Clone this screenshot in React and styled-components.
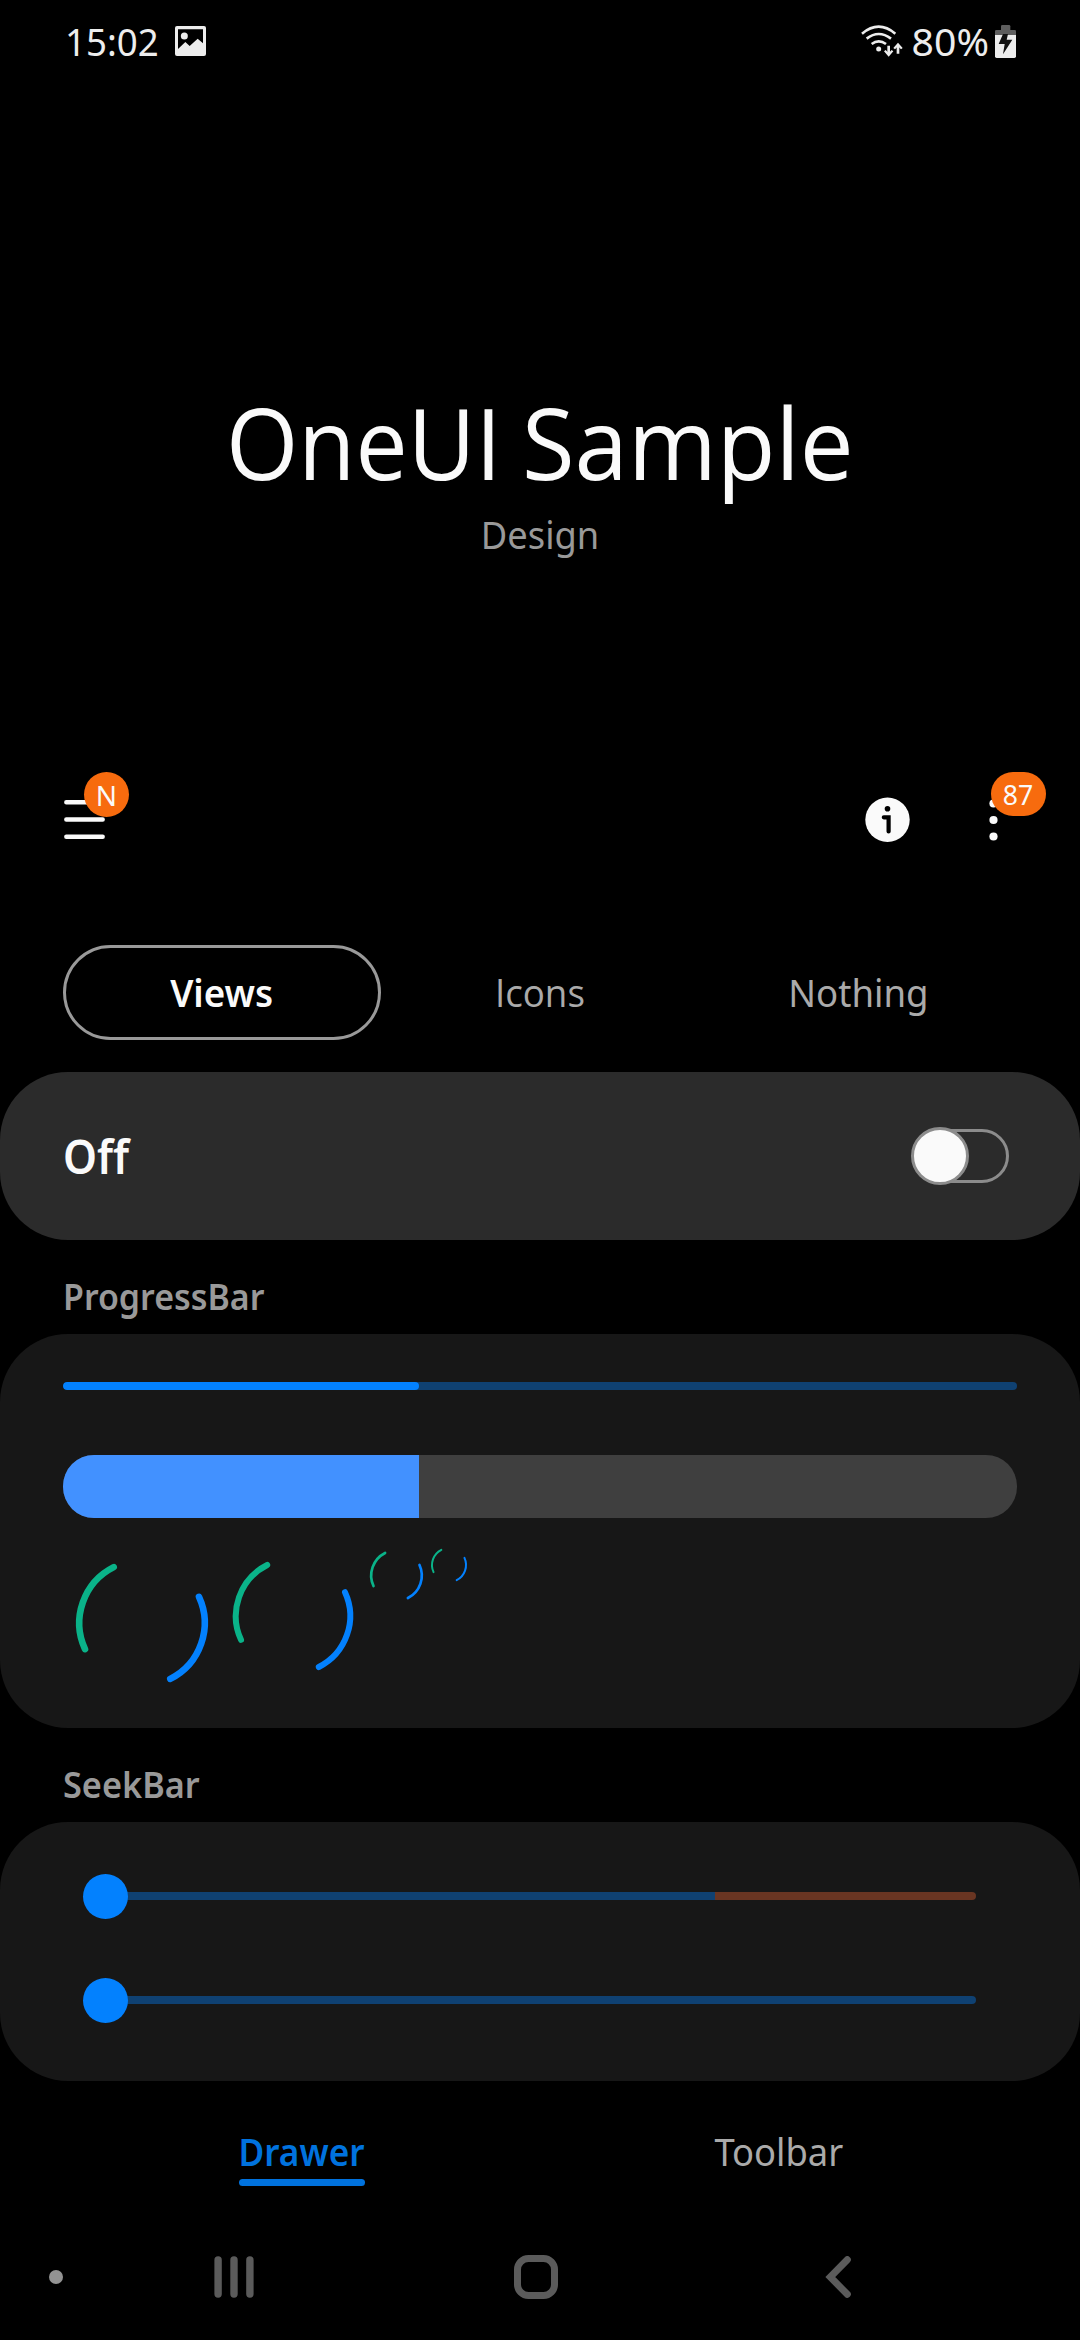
import React from "react";
import styled, { createGlobalStyle } from "styled-components";

const GlobalStyle = createGlobalStyle`
  *, *::before, *::after { box-sizing: border-box; }
  body {
    margin: 0;
    background: #000;
    color: #fafafa;
    font-family: "Noto Sans", "Open Sans", sans-serif;
  }
  button {
    border: 0;
    padding: 0;
    background: none;
    color: inherit;
    font: inherit;
  }
  svg { display: block; }
`;

const Screen = styled.div`
  display: flex;
  flex-direction: column;
  width: 1080px;
  height: 2340px;
  overflow: hidden;
`;

/* Text set slightly narrower than the family's own width. */
const Label = styled.span`
  display: inline-block;
  white-space: pre;
  font-family: ${(p) => (p.$plain ? '"Open Sans"' : '"Noto Sans"')}, sans-serif;
  transform: scaleX(${(p) => p.$narrow || 1});
  transform-origin: ${(p) => p.$origin || "center"};
`;

const StatusBar = styled.header`
  display: flex;
  justify-content: space-between;
  align-items: center;
  height: 82px;
  padding: 0 64px 0 65px;
  color: #ededed;
  font-size: 38.8px;
  line-height: 50px;
`;

const StatusGroup = styled.div`
  display: flex;
  align-items: center;
`;

const Clock = styled.div`
  width: 110px;
`;

const Percent = styled.div`
  display: flex;
  justify-content: center;
  width: 92px;
  padding-left: 2px;
`;

const Hero = styled.section`
  display: flex;
  flex-direction: column;
  align-items: center;
  height: 663px;
  padding-top: 299px;
`;

const Title = styled.h1`
  display: flex;
  margin: 0;
  font-size: 99.5px;
  font-weight: 400;
  line-height: 121px;
`;

const TitleWord = styled(Label)`
  margin-left: ${(p) => p.$tuck || "0"};
`;

const Subtitle = styled.p`
  margin: 7px 0 0;
  color: #999;
  font-size: 38px;
  line-height: 50px;
`;

const Toolbar = styled.div`
  display: flex;
  align-items: center;
  height: 149px;
  padding: 0 82px 0 64px;
`;

const ToolButton = styled.button`
  position: relative;
  margin-left: ${(p) => p.$gap || "0"};
`;

const Badge = styled.span`
  position: absolute;
  left: ${(p) => p.$left};
  top: ${(p) => p.$top};
  display: flex;
  align-items: center;
  justify-content: center;
  width: ${(p) => p.$width};
  height: ${(p) => p.$height};
  border-radius: 23px;
  background: #f76b0e;
  font-size: 28px;
`;

const Tabs = styled.nav`
  display: grid;
  grid-template-columns: repeat(3, 1fr);
  margin: 51px 63px 32px;
  height: 95px;
`;

const Tab = styled.button`
  padding-bottom: 2px;
  border: 3px solid ${(p) => (p.$active ? "#999" : "transparent")};
  border-radius: 47.5px;
  color: ${(p) => (p.$active ? "#fafafa" : "#aaa")};
  font-size: 38.3px;
  font-weight: ${(p) => (p.$active ? 600 : 400)};
`;

const SwitchBar = styled.section`
  display: flex;
  align-items: center;
  justify-content: space-between;
  height: 168px;
  padding: 0 71px 0 63px;
  border-radius: 68px;
  background: #2b2b2b;
  font-size: 47px;
  font-weight: 600;
`;

const Switch = styled.button`
  position: relative;
  width: 98px;
  height: 58px;
  padding: 2px 0 2px 6px;
`;

const SwitchTrack = styled.span`
  display: block;
  height: 54px;
  border: 3px solid #8c8c8c;
  border-radius: 27px;
`;

const SwitchThumb = styled.span`
  position: absolute;
  left: 0;
  top: 0;
  width: 58px;
  height: 58px;
  border: 3px solid #8c8c8c;
  border-radius: 50%;
  background: #fafafa;
`;

const SectionTitle = styled.h2`
  height: 94px;
  margin: 0;
  padding: 18px 63px 0;
  color: #999;
  font-size: 36.5px;
  font-weight: 600;
  line-height: 76px;
`;

const Card = styled.section`
  height: ${(p) => p.$height};
  padding: ${(p) => p.$padding};
  border-radius: 68px;
  background: #171717;
`;

const Progress = styled.div`
  overflow: hidden;
  height: 8px;
  border-radius: 4px;
  background: #0f4172;
`;

const ProgressFill = styled.div`
  width: 356px;
  height: 100%;
  border-radius: 4px;
  background: #0381fe;
`;

const BigProgress = styled(Progress)`
  height: 63px;
  margin-top: 65px;
  border-radius: 31px;
  background: #3f3f3f;
`;

const BigProgressFill = styled(ProgressFill)`
  border-radius: 0;
  background: #4291ff;
`;

const Spinners = styled.div`
  display: flex;
  align-items: flex-start;
  margin-top: 26px;
`;

const Seek = styled.div`
  display: flex;
  align-items: center;
  height: ${(p) => p.$height};
`;

const SeekThumb = styled.span`
  z-index: 1;
  width: 45px;
  height: 45px;
  border-radius: 50%;
  background: #0381fe;
`;

const SeekTrack = styled.span`
  width: ${(p) => p.$width};
  height: 8px;
  margin-left: ${(p) => p.$overlap || "0"};
  border-radius: ${(p) => (p.$end ? "0 4px 4px 0" : "0")};
  background: ${(p) => (p.$warn ? "#693522" : "#0f4172")};
`;

const BottomTabs = styled.nav`
  display: grid;
  grid-template-columns: 1fr 1fr;
  height: 133px;
  padding: 42px 63px 0;
`;

const BottomTab = styled.button`
  display: flex;
  flex-direction: column;
  align-items: center;
  color: ${(p) => (p.$active ? "#0072de" : "#aaa")};
  font-size: 38.3px;
  font-weight: ${(p) => (p.$active ? 600 : 400)};
  line-height: 56px;
`;

const Underline = styled.span`
  width: 126px;
  height: 7px;
  border-radius: 3.5px;
  background: #0072de;
`;

const SystemNav = styled.footer`
  display: flex;
  align-items: center;
  height: 126px;
  padding-left: 49px;
`;

const NavDot = styled.span`
  width: 14px;
  height: 14px;
  margin-right: 20px;
  border-radius: 50%;
  background: #939393;
`;

const NavButton = styled.button`
  display: flex;
  justify-content: center;
  width: 302px;
`;

const PictureIcon = () => (
  <svg width="31" height="30" viewBox="405 78 93 90">
    <rect x="405" y="78" width="93" height="90" rx="6" fill="#ededed" />
    <path d="M414 88H489V130L473 116L449 138L436 126L414 147Z" fill="#000" />
    <circle cx="433" cy="108" r="10.5" fill="#ededed" />
  </svg>
);

const WifiIcon = () => (
  <svg width="42" height="34" viewBox="62 73 126 102" fill="none" stroke="#ededed" strokeWidth="8">
    <path d="M65 102Q115 60 165 102" />
    <path d="M79 117Q115 89 152 117" />
    <path d="M94 133Q115 117 137 133" />
    <circle cx="115" cy="148" r="7.5" fill="#ededed" stroke="none" />
    <path d="M145 138V160M173 162V138" />
    <path d="M131 155L145 171L159 155L154 151L145 160L136 151Z" fill="#ededed" stroke="none" />
    <path d="M159 145L173 129L187 145L182 149L173 140L164 149Z" fill="#ededed" stroke="none" />
  </svg>
);

const BatteryIcon = () => (
  <svg width="21" height="33" viewBox="465 75 63 99">
    <path d="M483 90V79Q483 75 487 75H507Q511 75 511 79V90Z" fill="#5e5e5e" />
    <path d="M465 106V94Q465 90 469 90H524Q528 90 528 94V106Z" fill="#5e5e5e" />
    <path d="M465 105H528V169Q528 174 523 174H470Q465 174 465 169Z" fill="#ededed" />
    <path d="M489 102H504L500 119H517L489 163L494 132H476Z" fill="#111" />
  </svg>
);

const MenuIcon = () => (
  <svg width="41" height="39" viewBox="0 0 41 39" stroke="#fafafa" strokeWidth="4.4" strokeLinecap="round">
    <path d="M2.3 2.3H38.7M2.3 19.5H38.7M2.3 36.7H38.7" />
  </svg>
);

const InfoIcon = () => (
  <svg width="45" height="45" viewBox="0 0 45 45">
    <circle cx="22.5" cy="22.8" r="22.2" fill="#fafafa" />
    <circle cx="22.5" cy="11.8" r="2.8" fill="#000" />
    <path d="M18.8 20.3H23.6V34.5" fill="none" stroke="#000" strokeWidth="4.2" strokeLinecap="round" />
  </svg>
);

const MoreIcon = () => (
  <svg width="9" height="42" viewBox="0 0 9 42" fill="#fafafa">
    <circle cx="4.5" cy="4.5" r="4.1" />
    <circle cx="4.5" cy="21" r="4.1" />
    <circle cx="4.5" cy="37.5" r="4.1" />
  </svg>
);

const RecentsIcon = () => (
  <svg width="42" height="42" viewBox="0 0 42 42" stroke="#5b5b5b" strokeWidth="7.4" strokeLinecap="round">
    <path d="M5.1 3.9V38.1M21 3.9V38.1M36.9 3.9V38.1" />
  </svg>
);

const HomeIcon = () => (
  <svg width="44" height="44" viewBox="0 0 44 44">
    <rect x="3.5" y="3.5" width="37" height="37" rx="11" fill="none" stroke="#5b5b5b" strokeWidth="7" />
  </svg>
);

const BackIcon = () => (
  <svg width="26" height="42" viewBox="0 0 26 42">
    <path d="M22.3 3.7L5.3 21L22.3 38.3" fill="none" stroke="#5b5b5b" strokeWidth="7" strokeLinecap="round" />
  </svg>
);

/* Two opposite arcs of one circle; r and stroke are in pixels. */
const Spinner = ({ size, r, stroke }) => {
  const ax = r * 0.451;
  const ay = r * 0.892;
  const bx = r * 0.909;
  const by = r * 0.417;
  const h = size / 2;
  return (
    <svg
      width={size}
      height={size}
      viewBox={`${-h} ${-h} ${size} ${size}`}
      fill="none"
      strokeWidth={stroke}
      strokeLinecap="round"
    >
      <path d={`M${-ax} ${-ay}A${r} ${r} 0 0 0 ${-bx} ${by}`} stroke="#0ab389" />
      <path d={`M${ax} ${ay}A${r} ${r} 0 0 0 ${bx} ${-by}`} stroke="#0381fe" />
    </svg>
  );
};

export default function App() {
  return (
    <Screen>
      <GlobalStyle />
      <StatusBar>
        <StatusGroup>
          <Clock>
            <Label $narrow={0.945} $origin="left">15:02</Label>
          </Clock>
          <PictureIcon />
        </StatusGroup>
        <StatusGroup>
          <WifiIcon />
          <Percent>
            <Label $narrow={1.01}>80%</Label>
          </Percent>
          <BatteryIcon />
        </StatusGroup>
      </StatusBar>

      <Hero>
        <Title>
          <TitleWord $plain $narrow={0.935} $origin="left">OneUI</TitleWord>
          <TitleWord $plain $narrow={0.965} $origin="right" $tuck="-36px"> Sample</TitleWord>
        </Title>
        <Subtitle>
          <Label $narrow={0.955}>Design</Label>
        </Subtitle>
      </Hero>

      <Toolbar>
        <ToolButton aria-label="Menu">
          <MenuIcon />
          <Badge $left="20px" $top="-28px" $width="45px" $height="45px">
            <Label>N</Label>
          </Badge>
        </ToolButton>
        <ToolButton aria-label="Info" $gap="auto">
          <InfoIcon />
        </ToolButton>
        <ToolButton aria-label="More options" $gap="79px">
          <MoreIcon />
          <Badge $left="2px" $top="-27px" $width="55px" $height="44px">
            <Label $narrow={0.95}>87</Label>
          </Badge>
        </ToolButton>
      </Toolbar>

      <Tabs>
        <Tab $active>
          <Label $narrow={0.96}>Views</Label>
        </Tab>
        <Tab>
          <Label $plain $narrow={0.96}>Icons</Label>
        </Tab>
        <Tab>
          <Label $narrow={0.955}>Nothing</Label>
        </Tab>
      </Tabs>

      <SwitchBar>
        <Label $narrow={0.92} $origin="left">Off</Label>
        <Switch aria-label="Toggle">
          <SwitchTrack />
          <SwitchThumb />
        </Switch>
      </SwitchBar>

      <SectionTitle>
        <Label $narrow={0.93} $origin="left">ProgressBar</Label>
      </SectionTitle>
      <Card $height="394px" $padding="48px 63px 0">
        <Progress>
          <ProgressFill />
        </Progress>
        <BigProgress>
          <BigProgressFill />
        </BigProgress>
        <Spinners>
          <Spinner size={158} r={62.7} stroke={6.6} />
          <Spinner size={144} r={57.2} stroke={6} />
          <Spinner size={63} r={25.3} stroke={2.7} />
          <Spinner size={42} r={17} stroke={2} />
        </Spinners>
      </Card>

      <SectionTitle>
        <Label $narrow={0.94} $origin="left">SeekBar</Label>
      </SectionTitle>
      <Card $height="259px" $padding="22px 82px 0 82.5px">
        <Seek $height="104px">
          <SeekThumb />
          <SeekTrack $width="590px" $overlap="-3px" />
          <SeekTrack $width="261px" $warn $end />
        </Seek>
        <Seek $height="104px">
          <SeekThumb />
          <SeekTrack $width="851px" $overlap="-3px" $end />
        </Seek>
      </Card>

      <BottomTabs>
        <BottomTab $active>
          <Label $narrow={0.92}>Drawer</Label>
          <Underline />
        </BottomTab>
        <BottomTab>
          <Label $narrow={0.95}>Toolbar</Label>
        </BottomTab>
      </BottomTabs>

      <SystemNav>
        <NavDot />
        <NavButton aria-label="Recents">
          <RecentsIcon />
        </NavButton>
        <NavButton aria-label="Home">
          <HomeIcon />
        </NavButton>
        <NavButton aria-label="Back">
          <BackIcon />
        </NavButton>
      </SystemNav>
    </Screen>
  );
}
